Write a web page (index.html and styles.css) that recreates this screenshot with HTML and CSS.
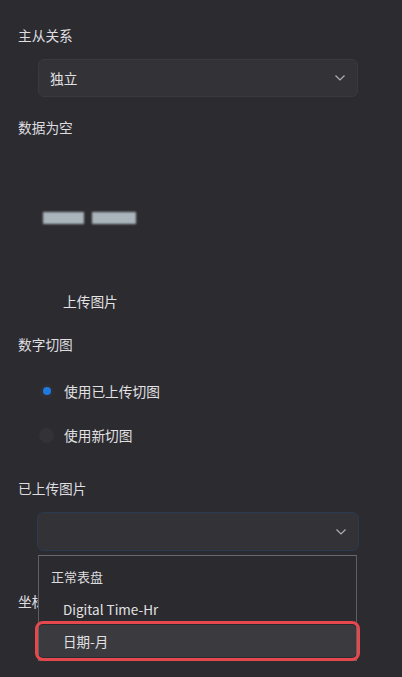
FILE: index.html
```html
<!DOCTYPE html>
<html lang="zh">
<head>
<meta charset="utf-8">
<link rel="stylesheet" href="styles.css">
</head>
<body>
<div class="panel">
  <div class="label">主从关系</div>
  <div class="select">
    <span class="select-value">独立</span>
    <svg class="chev" width="12" height="8" viewBox="0 0 12 8"><path d="M1.5 1.5 L6 6 L10.5 1.5" fill="none" stroke="#b0b0b4" stroke-width="1.2"/></svg>
  </div>

  <div class="label gap-20">数据为空</div>
  <div class="thumb">
    <span class="bar bar-a"></span>
    <span class="bar bar-b"></span>
  </div>
  <div class="upload">上传图片</div>

  <div class="label gap-23">数字切图</div>
  <div class="radio-row first">
    <span class="radio checked"><span class="radio-dot"></span></span>
    <span class="radio-text">使用已上传切图</span>
  </div>
  <div class="radio-row second">
    <span class="radio"></span>
    <span class="radio-text">使用新切图</span>
  </div>

  <div class="label gap-33">已上传图片</div>
  <div class="select-wrap">
    <div class="select focused">
      <span class="select-value"></span>
      <svg class="chev" width="12" height="8" viewBox="0 0 12 8"><path d="M1.5 1.5 L6 6 L10.5 1.5" fill="none" stroke="#b0b0b4" stroke-width="1.2"/></svg>
    </div>
    <div class="dropdown">
      <div class="group">正常表盘</div>
      <div class="option">Digital Time-Hr</div>
      <div class="option active">日期-月</div>
    </div>
  </div>
  <div class="label gap-40">坐标</div>
</div>
</body>
</html>
```

FILE: styles.css
```css
* { box-sizing: border-box; }
html, body {
  margin: 0;
  padding: 0;
  background: #2c2b2f;
  height: 100%;
  overflow: hidden;
}
body {
  font-family: "Noto Sans CJK SC", "Noto Sans", sans-serif;
  font-size: 13.7px;
  color: #e4e4e6;
}
.panel {
  padding: 25px 0 0 18px;
}
.label {
  line-height: 20px;
  height: 20px;
  color: #dedee0;
}
.gap-20 { margin-top: 20px; }
.gap-23 { margin-top: 23px; }
.gap-33 { margin-top: 33px; }
.gap-40 { margin-top: 40px; }

.select {
  margin-top: 14px;
  margin-left: 20px;
  width: 320px;
  height: 38px;
  background: #333236;
  border: 1px solid #3a393e;
  border-radius: 6px;
  display: flex;
  align-items: center;
  justify-content: space-between;
  padding: 0 11px 0 11px;
}
.select-value {
  color: #e2e2e4;
  line-height: 20px;
}
.chev { display: block; }

.thumb {
  margin-top: 75px;
  margin-left: 25px;
  display: flex;
  gap: 8px;
  height: 12px;
}
.bar {
  display: block;
  height: 12px;
  background: #a9b4bb;
  filter: blur(1.2px);
}
.bar-a { width: 41px; }
.bar-b { width: 44px; }

.upload {
  margin-top: 67px;
  margin-left: 45px;
  line-height: 20px;
  color: #e4e4e6;
}

.radio-row {
  display: flex;
  align-items: center;
  gap: 10px;
  margin-left: 21px;
  height: 20px;
}
.radio-row.first { margin-top: 27px; }
.radio-row.second { margin-top: 24px; }
.radio {
  width: 15px;
  height: 15px;
  border-radius: 50%;
  background: #333236;
  display: flex;
  align-items: center;
  justify-content: center;
}
.radio.checked { background: #2f2e33; }
.radio-dot {
  width: 8px;
  height: 8px;
  border-radius: 50%;
  background: #1f7ae0;
}
.radio-text { color: #e2e2e4; }

.select-wrap {
  position: relative;
  margin-top: 14px;
}
.select-wrap .select {
  margin-top: 0;
  margin-left: 19px;
  width: 322px;
  height: 39px;
}
.select.focused {
  border-color: #2a3a50;
  justify-content: flex-end;
}
.dropdown {
  position: absolute;
  top: 43px;
  left: 20px;
  width: 319px;
  background: #2b2a2e;
  border: 1px solid #5f5f63;
  border-top-color: #6a6a6e;
  padding: 5px 0 3px;
  z-index: 2;
}
.group {
  height: 32px;
  line-height: 32px;
  padding-left: 12px;
  color: #dcdcde;
  font-size: 13px;
}
.option {
  height: 32px;
  line-height: 32px;
  padding-left: 24px;
  color: #e2e2e4;
  font-size: 13.5px;
}
.option.active {
  background: #3b3b3f;
  outline: 3px solid #e5484d;
  outline-offset: 1px;
  border-radius: 4px;
}
```
